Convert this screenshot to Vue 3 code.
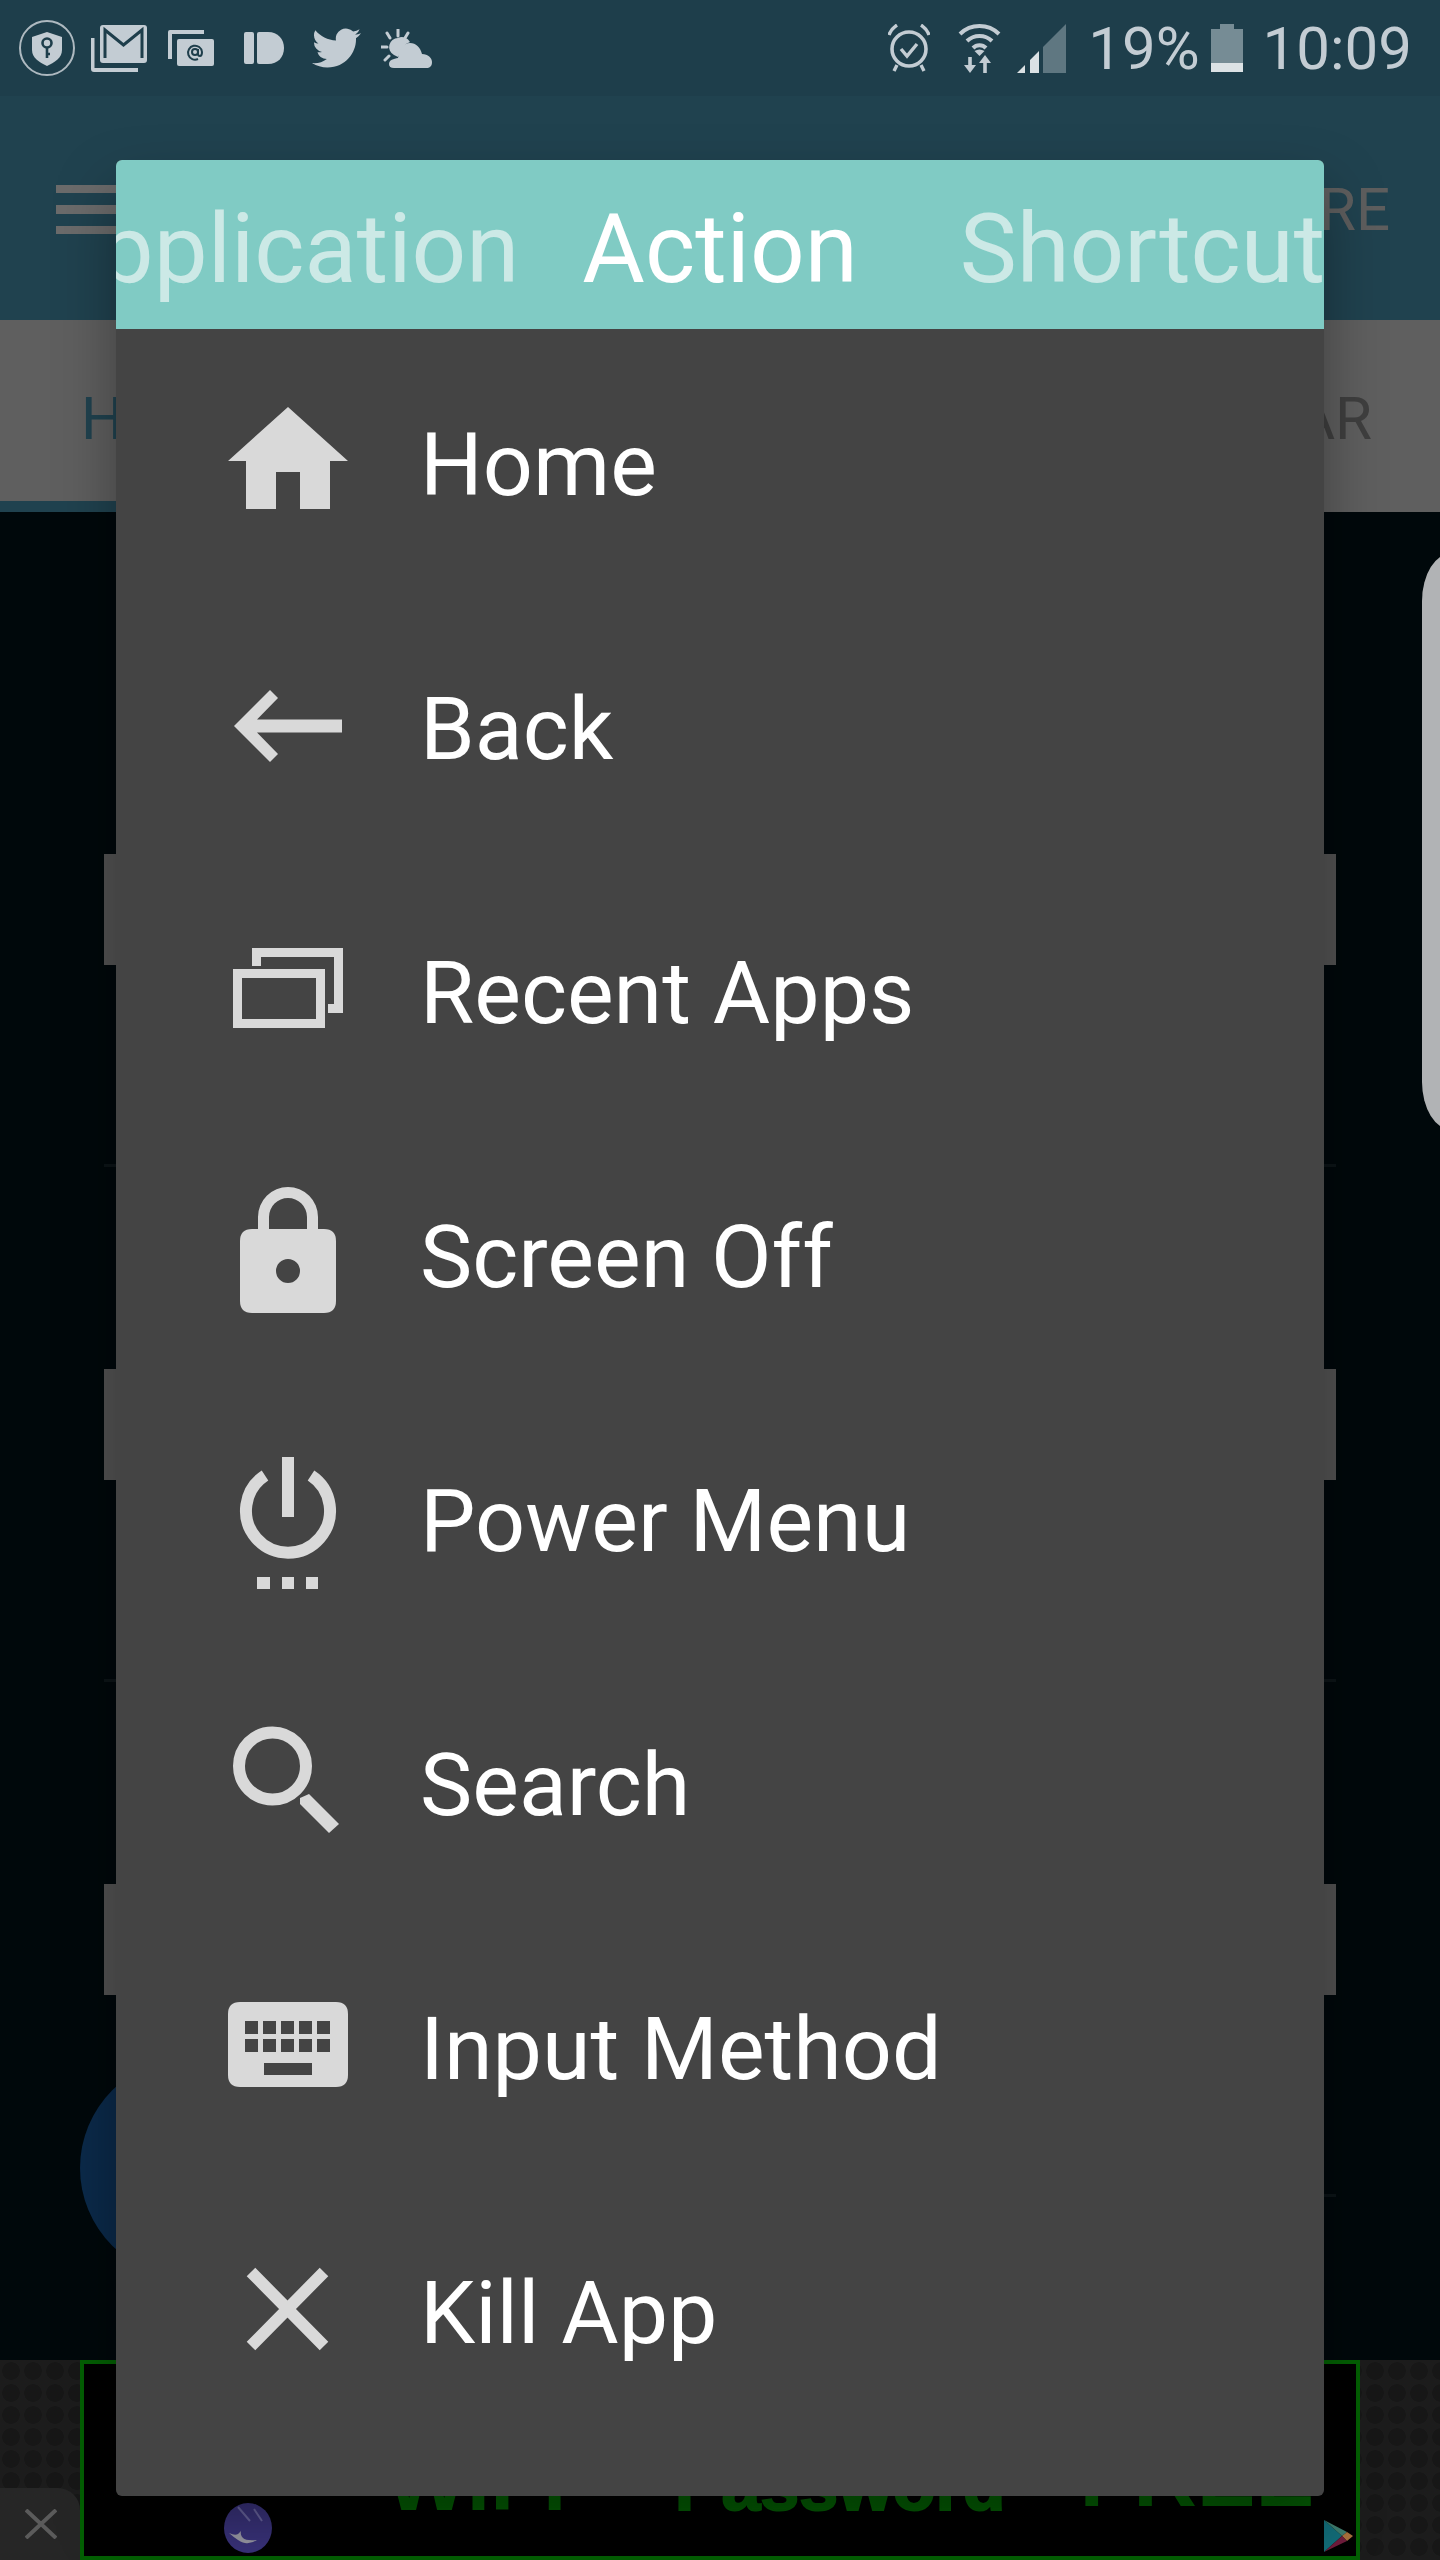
<template>
  <div class="phone">
    <div class="status-bar">
      <div class="status-left">
        <svg class="si-shield" width="56" height="56" viewBox="0 0 56 56">
          <ellipse cx="28" cy="28" rx="27" ry="27" fill="none" stroke="#aeb9c0" stroke-width="2" />
          <path d="M28 12l15 5v13c0 8-7 12-15 16-8-4-15-8-15-16V17z" fill="#c3ccd3" />
          <circle cx="28" cy="23" r="4.5" fill="none" stroke="#1e3e4b" stroke-width="2.6" />
          <path d="M28 27v11M28 34h3" fill="none" stroke="#1e3e4b" stroke-width="2.6" />
        </svg>
        <svg class="si-gmail" width="56" height="47" viewBox="0 0 56 47">
          <path d="M0 13h3.5v30H47v4H3q-3 0-3-3z" fill="#c3ccd3" />
          <rect x="9" y="0" width="47" height="38" rx="3" fill="#c3ccd3" />
          <path d="M14 33V5l18.5 15L51 5v28" fill="none" stroke="#1e3e4b" stroke-width="3" />
        </svg>
        <svg class="si-mail" width="46" height="36" viewBox="0 0 46 36">
          <path d="M0 29V2q0-2 2-2h34v4H4v25z" fill="#c3ccd3" />
          <rect x="9" y="9" width="37" height="27" rx="2" fill="#c3ccd3" />
          <circle cx="27" cy="22" r="3" fill="none" stroke="#1e3e4b" stroke-width="2" />
          <path d="M30 19v5q0 2 2 2t2-4a7 7 0 1 0-4 7" fill="none" stroke="#1e3e4b" stroke-width="2" />
        </svg>
        <svg class="si-id" width="40" height="32" viewBox="0 0 40 32">
          <rect x="0" y="0" width="10" height="32" rx="2" fill="#c3ccd3" />
          <path d="M13 2q0-2 2-2h9c10 0 16 7 16 16s-6 16-16 16h-9q-2 0-2-2z" fill="#c3ccd3" />
        </svg>
        <svg class="si-twitter" width="49" height="40" viewBox="0 2 24 20" preserveAspectRatio="none">
          <path d="M23.953 4.57a10 10 0 01-2.825.775 4.958 4.958 0 002.163-2.723c-.951.555-2.005.959-3.127 1.184a4.92 4.92 0 00-8.384 4.482C7.69 8.095 4.067 6.13 1.64 3.162a4.822 4.822 0 00-.666 2.475c0 1.71.87 3.213 2.188 4.096a4.904 4.904 0 01-2.228-.616v.06a4.923 4.923 0 003.946 4.827 4.996 4.996 0 01-2.212.085 4.936 4.936 0 004.604 3.417 9.867 9.867 0 01-6.102 2.105c-.39 0-.779-.023-1.17-.067a13.995 13.995 0 007.557 2.209c9.053 0 13.998-7.496 13.998-13.985 0-.21 0-.42-.015-.63A9.935 9.935 0 0024 4.59z" fill="#c3ccd3" />
        </svg>
        <svg class="si-weather" width="51" height="39" viewBox="0 0 51 39">
          <path d="M17 0v7M6 4l3 5M27 4l-3 5M0 18h6M4 31l4-4" fill="none" stroke="#c3ccd3" stroke-width="3" stroke-linecap="round" />
          <path d="M17 9a9 9 0 0 0-4 17l4 2 8-13 4-2a9 9 0 0 0-12-4z" fill="#c3ccd3" />
          <path d="M13 39q-5 0-5-4t5-5q3-1 4-1c2-10 6-15 12-15s10 4 12 11c6 0 10 4 10 8s-2 6-6 6z" fill="#c3ccd3" />
        </svg>
      </div>
      <div class="status-right">
        <svg width="42" height="48" viewBox="0 0 42 48">
          <circle cx="21" cy="25" r="17" fill="none" stroke="#c3ccd3" stroke-width="3.6" />
          <path d="M13 25l6 7 10-12" fill="none" stroke="#c3ccd3" stroke-width="3.4" />
          <path d="M1 11q2-6 8-10M41 11q-2-6-8-10M9 41l-3 6M33 41l3 6" fill="none" stroke="#c3ccd3" stroke-width="3.4" />
        </svg>
        <svg class="si-wifi" width="43" height="49" viewBox="0 0 43 49">
          <path d="M2 10a28 28 0 0 1 39 0M9 17a18 18 0 0 1 25 0M15 24a9 9 0 0 1 13 0" fill="none" stroke="#c3ccd3" stroke-width="4" />
          <path d="M21.5 32l-5-5q5-3 10 0z" fill="#c3ccd3" />
          <path d="M12 33v10M27 49V37" fill="none" stroke="#c3ccd3" stroke-width="3.6" />
          <path d="M6 41h12l-6 8zM21 39l6-8 6 8z" fill="#c3ccd3" />
        </svg>
        <svg class="si-signal" width="49" height="49" viewBox="0 0 49 49">
          <path d="M49 0v49H26V23z" fill="#5f7781" />
          <path d="M22 27v22h-9V36zM8 41v8H0z" fill="#dbe1e4" />
        </svg>
        <span class="si-percent">19%</span>
        <div class="si-battery">
          <span class="battery-cap"></span>
          <span class="battery-body"><span class="battery-level"></span></span>
        </div>
        <span class="si-clock">10:09</span>
      </div>
    </div>

    <div class="app-bar">
      <div class="menu-icon"><span></span><span></span><span></span></div>
      <span class="app-action">RE</span>
    </div>

    <div class="page-tabs">
      <div class="page-tab page-tab-on">H</div>
      <div class="page-tab page-tab-right">AR</div>
    </div>

    <div class="content">
      <div class="row" v-for="n in rows" :key="n"><div class="row-bar"></div></div>
    </div>

    <div class="ad">
      <div class="ad-frame">
        <div class="ad-text"><span class="ad-wifi">WiFi</span><span class="ad-pass">Password</span><span class="ad-free">FREE</span></div>
        <svg class="ad-planet" width="48" height="50" viewBox="0 0 48 50">
          <ellipse cx="24" cy="25" rx="24" ry="25" fill="#3a337c" />
          <path d="M14 4l12 14M30 6l8 12" fill="none" stroke="#6a66a0" stroke-width="2" />
          <path d="M5 30q6 3 9 1l3-3q-1 4 2 7t14 2q-6 4-12 3T5 30z" fill="#9c9ca8" />
        </svg>
        <svg class="ad-play" width="29" height="32" viewBox="0 0 29 32">
          <path d="M0 0l18 16L0 32z" fill="#126c78" />
          <path d="M0 0l23 12-5 4z" fill="#3d7c6e" />
          <path d="M23 12l6 4-6 5-5-5z" fill="#a8703c" />
          <path d="M18 16l5 5L0 32z" fill="#701c3c" />
        </svg>
      </div>
      <div class="ad-close">
        <svg width="32" height="30" viewBox="0 0 32 30">
          <path d="M1 1l30 28M31 1L1 29" fill="none" stroke="#5b5b5b" stroke-width="4" />
        </svg>
      </div>
    </div>

    <div class="fab"></div>
    <div class="edge-handle"></div>

    <div class="dialog">
      <div class="dialog-tabs">
        <span class="dialog-tab tab-first">Application</span>
        <span class="dialog-tab tab-active">Action</span>
        <span class="dialog-tab">Shortcut</span>
      </div>
      <div class="action-list">
        <div class="action">
          <svg class="action-icon" viewBox="0 0 144 144">
            <path d="M72 15l60 54h-18v48H84V80H60v37H30V69H12z" />
          </svg>
          <span>Home</span>
        </div>
        <div class="action">
          <svg class="action-icon" viewBox="0 0 144 144">
            <path d="M18 70l36-36 8 8-21 21.5h85v13H41l21 21.5-8 8z" />
          </svg>
          <span>Back</span>
        </div>
        <div class="action">
          <svg class="action-icon" viewBox="0 0 144 144">
            <path d="M36 28h91v65h-15v-9h6V37H45v9h-9z" />
            <path fill-rule="evenodd" d="M17 49h92v59H17zM26 58v41h74V58z" />
          </svg>
          <span>Recent Apps</span>
        </div>
        <div class="action">
          <svg class="action-icon" viewBox="0 0 144 144">
            <path fill-rule="evenodd" d="M36 45h6V33a30 30 0 0 1 60 0v12h6q12 0 12 12v60q0 12-12 12H36q-12 0-12-12V57q0-12 12-12zM53 45h38V33a19 19 0 0 0-38 0zM72 75a12 12 0 1 0 0 24 12 12 0 0 0 0-24z" />
          </svg>
          <span>Screen Off</span>
        </div>
        <div class="action">
          <svg class="action-icon" viewBox="0 0 144 144">
            <path class="stroke" d="M49 27.5A42 42 0 1 0 95 27.5" stroke-width="12" />
            <path d="M66 9h12v60H66zM41 129h13v12H41zM66 129h12v12H66zM90 129h12v12H90z" />
          </svg>
          <span>Power Menu</span>
        </div>
        <div class="action">
          <svg class="action-icon" viewBox="0 0 144 144">
            <circle class="stroke" cx="56.5" cy="54" r="33.5" stroke-width="12" />
            <path d="M93 82l30 30-10 9-29-29v-6z" />
          </svg>
          <span>Search</span>
        </div>
        <div class="action">
          <svg class="action-icon" viewBox="0 0 144 144">
            <path fill-rule="evenodd" d="M24 26h96q12 0 12 12v61q0 12-12 12H24q-12 0-12-12V38q0-12 12-12zM29 45v13h13V45zM47 45v13h13V45zM65 45v13h13V45zM83 45v13h13V45zM101 45v13h13V45zM29 63v13h13V63zM47 63v13h13V63zM65 63v13h13V63zM83 63v13h13V63zM101 63v13h13V63zM48 87v12h48V87z" />
          </svg>
          <span>Input Method</span>
        </div>
        <div class="action">
          <svg class="action-icon" viewBox="0 0 144 144">
            <path class="stroke" d="M35 32l73 74M108 32l-73 74" stroke-width="12" />
          </svg>
          <span>Kill App</span>
        </div>
      </div>
    </div>
  </div>
</template>

<script setup>
const rows = [1, 2, 3]
</script>

<style>
body {
  background: #00080b;
}
</style>

<style scoped>
.phone {
  position: relative;
  width: 1440px;
  height: 2560px;
  overflow: hidden;
  display: flex;
  flex-direction: column;
  background: #00080b;
  font-family: Roboto, "Liberation Sans", sans-serif;
}

.status-bar {
  height: 96px;
  flex-shrink: 0;
  display: flex;
  justify-content: space-between;
  align-items: center;
  background: #1e3e4b;
  color: #c3ccd3;
}

.status-left,
.status-right {
  display: flex;
  align-items: center;
}

.status-left {
  padding-left: 19px;
}

.status-right {
  padding-right: 28px;
}

.si-gmail { margin-left: 16px; }
.si-mail { margin-left: 21px; }
.si-id { margin-left: 30px; }
.si-twitter { margin-left: 28px; }
.si-weather { margin-left: 20px; }
.si-wifi { margin-left: 28px; }
.si-signal { margin-left: 16px; }

.si-percent,
.si-clock {
  font-size: 60px;
  line-height: 96px;
  font-weight: 400;
  position: relative;
  top: 1px;
}

.si-percent {
  margin-left: 22px;
}

.si-battery {
  margin-left: 11px;
  width: 32px;
  height: 48px;
  display: flex;
  flex-direction: column;
  align-items: center;
}

.battery-cap {
  width: 14px;
  height: 5px;
  background: #768c95;
}

.battery-body {
  width: 32px;
  height: 43px;
  background: #768c95;
  display: flex;
  align-items: flex-end;
}

.battery-level {
  width: 100%;
  height: 9px;
  background: #dce2e5;
}

.si-clock {
  margin-left: 20px;
}

.app-bar {
  height: 224px;
  flex-shrink: 0;
  display: flex;
  justify-content: space-between;
  align-items: center;
  padding: 0 50px 0 56px;
  background: #20424f;
}

.menu-icon {
  display: flex;
  flex-direction: column;
  gap: 12px;
  width: 72px;
  margin-top: 3px;
}

.menu-icon span {
  height: 8.5px;
  background: #6b6b6b;
}

.app-action {
  font-size: 60px;
  line-height: 60px;
  color: #5e5e5e;
  margin-top: 3px;
}

.page-tabs {
  height: 192px;
  flex-shrink: 0;
  display: flex;
  justify-content: space-between;
  background: #5f5f5f;
  font-size: 60px;
}

.page-tab {
  height: 181px;
  line-height: 198px;
}

.page-tab-on {
  width: 420px;
  padding-left: 81px;
  border-bottom: 11px solid #20424f;
  color: #20424f;
}

.page-tab-right {
  padding-right: 68px;
  color: #3f3f3f;
}

.content {
  flex: 1;
  padding: 140px 104px 0;
  background: #00080b;
  overflow: hidden;
}

.row {
  height: 515px;
  box-sizing: border-box;
  display: flex;
  align-items: center;
  padding-top: 3px;
  border-bottom: 3px solid #0c1417;
}

.row-bar {
  width: 100%;
  height: 111px;
  background: #535353;
}

.ad {
  position: relative;
  height: 200px;
  flex-shrink: 0;
  padding: 0 80px;
  background-color: #1c1c1c;
  background-image: radial-gradient(circle, #171717 55%, transparent 58%);
  background-size: 22px 22px;
}

.ad-frame {
  position: relative;
  box-sizing: border-box;
  height: 200px;
  border: 4px solid #036003;
  background: #000;
  overflow: hidden;
}

.ad-text {
  display: flex;
  align-items: baseline;
  padding: 71px 0 0 302px;
  font-family: "Liberation Sans", Arial, sans-serif;
  font-weight: 700;
  font-size: 84px;
  line-height: 100px;
  color: #045c04;
  white-space: nowrap;
  filter: blur(0.6px);
}

.ad-wifi {
  font-size: 86px;
  position: relative;
  top: -5px;
}

.ad-pass {
  margin-left: 108px;
  font-size: 70px;
  position: relative;
  top: -5px;
  -webkit-text-stroke: 2px #045c04;
}

.ad-free {
  margin-left: 74px;
  font-size: 88px;
  position: relative;
  top: -9px;
}

.ad-planet {
  position: absolute;
  left: 140px;
  top: 139px;
  filter: blur(0.6px);
}

.ad-play {
  position: absolute;
  right: 3px;
  top: 156px;
  filter: blur(0.5px);
}

.ad-close {
  position: absolute;
  left: 0;
  bottom: 0;
  width: 80px;
  height: 72px;
  display: flex;
  align-items: center;
  justify-content: center;
  padding-left: 2px;
  box-sizing: border-box;
  background: #262626;
  border-top-right-radius: 22px;
}

.fab {
  position: absolute;
  left: 80px;
  top: 2058px;
  width: 220px;
  height: 220px;
  border-radius: 50%;
  background: #0b2a4a;
}

.edge-handle {
  position: absolute;
  left: 1422px;
  top: 553px;
  width: 60px;
  height: 577px;
  border-radius: 50px / 80px;
  background: #b1b3b5;
}

.dialog {
  position: absolute;
  left: 116px;
  top: 160px;
  width: 1208px;
  height: 2336px;
  display: flex;
  flex-direction: column;
  background: #444444;
  border-radius: 6px;
  overflow: hidden;
  box-shadow: 0 30px 60px rgba(0, 0, 0, 0.35);
}

.dialog-tabs {
  height: 169px;
  flex-shrink: 0;
  box-sizing: border-box;
  padding-left: 36px;
  display: grid;
  grid-template-columns: 1fr auto 1fr;
  overflow: hidden;
  background: #80cbc4;
  font-size: 96px;
  line-height: 179px;
  white-space: nowrap;
}

.dialog-tab {
  color: #cce9e6;
  min-width: 0;
}

.tab-first {
  justify-self: end;
  margin-right: -3px;
}

.tab-active {
  color: #ffffff;
  padding: 0 102px 0 66px;
}

.action-list {
  padding-top: 3px;
}

.action {
  height: 264px;
  display: flex;
  align-items: center;
  gap: 60px;
  padding-left: 100px;
  color: #ffffff;
  font-size: 88px;
}

.action-icon {
  width: 144px;
  height: 144px;
  flex-shrink: 0;
  fill: #d9d9d9;
}

.action-icon .stroke {
  fill: none;
  stroke: #d9d9d9;
}
</style>
